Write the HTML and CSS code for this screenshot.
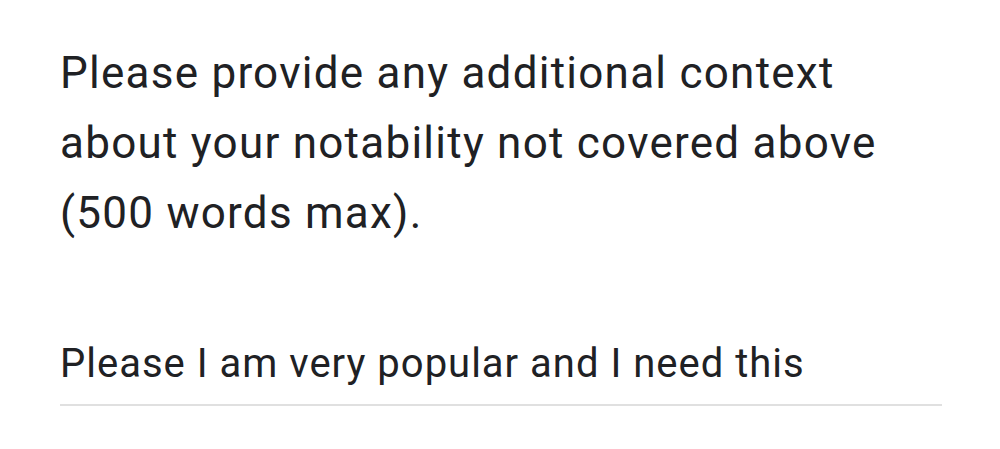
FILE: index.html
```html
<!DOCTYPE html>
<html>
<head>
<meta charset="utf-8">
<link rel="stylesheet" href="styles.css">
</head>
<body>
<div class="page">
  <p class="question">Please provide any additional context about your notability not covered above (500 words max).</p>
  <div class="answer">Please I am very popular and I need this</div>
</div>
</body>
</html>
```
FILE: styles.css
```css
html, body {
  margin: 0;
  padding: 0;
  background: #ffffff;
}
.page {
  width: 882px;
  padding: 38px 0 0 60px;
  font-family: Roboto, "Noto Sans", sans-serif;
  color: #202124;
}
.question {
  margin: 0;
  font-size: 44px;
  line-height: 70px;
  letter-spacing: 1.25px;
}
.answer {
  margin-top: 92px;
  font-size: 40px;
  line-height: 48px;
  letter-spacing: 1px;
  padding-bottom: 16px;
  border-bottom: 2px solid #e0e0e0;
}
```
